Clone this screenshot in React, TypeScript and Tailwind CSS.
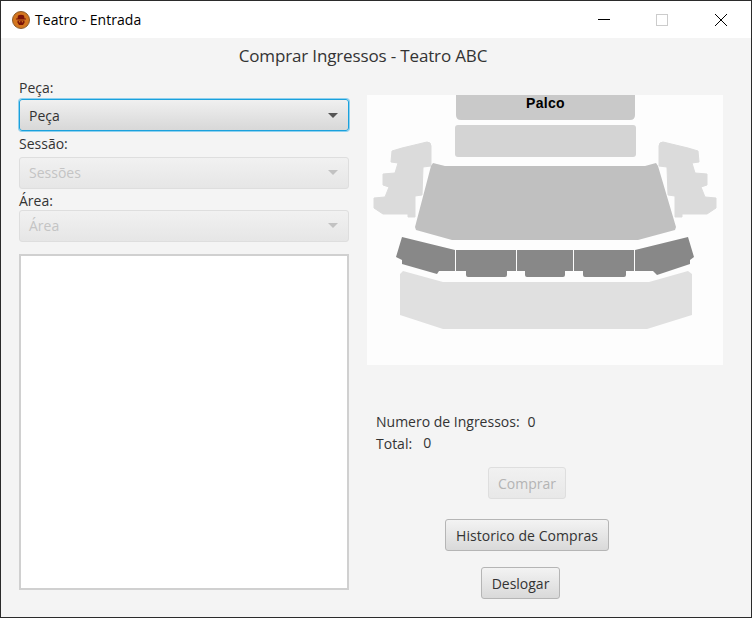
const font = { fontFamily: '"Open Sans", "Noto Sans", sans-serif' };

const ComboBox = ({ label, disabled }: { label: string; disabled?: boolean }) => (
  <div
    className={`flex h-[32px] w-[330px] items-center justify-between rounded-[3px] border bg-gradient-to-b pl-[9px] pr-[10px] text-[14px] ${
      disabled
        ? 'border-[#dedede] from-[#f1f1f1] to-[#e6e6e6] pb-[2px] text-[#c4c4c4]'
        : 'border-[#1aa1dc] from-[#f0f0f0] to-[#d8d8d8] text-[#333333] shadow-[0_0_0_1px_#8fd0ee]'
    }`}
  >
    <span>{label}</span>
    <svg width="10" height="5" viewBox="0 0 10 5">
      <path d="M0 0h10L5 5z" fill={disabled ? '#c2c2c2' : '#555555'} />
    </svg>
  </div>
);

const ActionButton = ({ label, disabled, className }: { label: string; disabled?: boolean; className: string }) => (
  <button
    className={`flex h-[32px] items-center justify-center rounded-[3px] border bg-gradient-to-b text-[14px] ${
      disabled
        ? 'border-[#dedede] from-[#f1f1f1] to-[#e8e8e8] text-[#b4b4b4]'
        : 'border-[#b5b5b5] from-[#f3f3f3] to-[#d9d9d9] text-[#333333]'
    } ${className}`}
  >
    {label}
  </button>
);

const SideBlock = () => (
  <path
    d="M64 51Q64 47 60 47L35 53 25 56 24 67 31 68 28 78 16 79 16 90 22 92 18 102 7 103 7 113 16 119 41 119 41 122 48 122 48 101 55 100 56 72 64 71Z"
    fill="#dbdbdb"
    stroke="#dbdbdb"
    strokeLinejoin="round"
  />
);

const SeatMap = () => (
  <svg width="356" height="270" viewBox="0 0 356 270" className="bg-[#fdfdfd]">
    <path d="M89 0H268V20Q268 25 263 25H94Q89 25 89 20Z" fill="#c9c9c9" />
    <text x="178.5" y="12.5" textAnchor="middle" fontFamily="Liberation Sans" fontWeight="700" fontSize="14" letterSpacing="0.3" fill="#000000">
      Palco
    </text>
    <rect x="88" y="30" width="181" height="32" rx="3" fill="#d4d4d4" />
    <SideBlock />
    <g transform="translate(356 0) scale(-1 1)">
      <SideBlock />
    </g>
    <path d="M66 68 78 71H278L289 68 291 71 309 132 308 135 271 145H85L49 135 48 132 64 71Z" fill="#c0c0c0" />
    <path d="M35 142 88 155V176H72L70 179 35 169V165L29 162Z" fill="#888888" />
    <path d="M89 155H149V176H140V180Q140 182 138 182H101Q99 182 99 180V176H89Z" fill="#888888" />
    <path d="M150 155H206V176H198V180Q198 182 196 182H160Q158 182 158 180V176H150Z" fill="#888888" />
    <path d="M207 155H267V176H259V180Q259 182 257 182H218Q216 182 216 180V176H207Z" fill="#888888" />
    <path d="M268 155 321 142 327 162 323 165V169L290 180 286 176H268Z" fill="#888888" />
    <path d="M33 179 36 176 76 187H282L321 176 325 179V220L280 234H76L33 220Z" fill="#e0e0e0" />
  </svg>
);

const AppLogo = () => (
  <svg width="18" height="18" viewBox="0 0 18 18">
    <circle cx="9" cy="9" r="8.5" fill="#d4761e" stroke="#8a5a2a" />
    <path d="M6 4.5Q9 3 12 4.5L12.5 7.5H14V8.5H4V7.5H5.5Z" fill="#7a1408" />
    <path d="M5.5 9.5H12.5V11.5L11 14H7L5.5 11.5Z" fill="#7a1408" />
    <circle cx="7.6" cy="10.8" r="0.8" fill="#d4761e" />
    <circle cx="10.4" cy="10.8" r="0.8" fill="#d4761e" />
  </svg>
);

const App = () => {
  return (
    <div style={font} className="flex h-[618px] w-[752px] flex-col overflow-hidden border border-[#2b2b2b] bg-[#f4f4f4] text-[14px] text-[#333333]">
      {/* Title bar */}
      <div className="flex h-[37px] shrink-0 items-center bg-white pl-[11px] text-black">
        <AppLogo />
        <span className="ml-[5px] tracking-[0.05px]">Teatro - Entrada</span>
        <div className="ml-auto flex items-center">
          <svg width="46" height="12" viewBox="0 0 46 12">
            <path d="M17 5.5H29" stroke="#000000" />
          </svg>
          <svg width="46" height="12" viewBox="0 0 46 12" className="ml-[12px]">
            <rect x="17.5" y="0.5" width="11" height="11" fill="none" stroke="#cccccc" />
          </svg>
          <svg width="46" height="12" viewBox="0 0 46 12" className="ml-[13px] mr-[7px]">
            <path d="M17 0 29 12M29 0 17 12" stroke="#000000" />
          </svg>
        </div>
      </div>

      <h1 className="mt-[7px] pr-[26px] text-center text-[17px] leading-[22px] tracking-[-0.15px]">Comprar Ingressos - Teatro ABC</h1>

      <div className="mt-[11px] flex pl-[18px]">
        {/* Left column */}
        <div className="flex w-[348px] shrink-0 flex-col">
          <label className="h-[21px] leading-[19px]">Peça:</label>
          <ComboBox label="Peça" />
          <label className="mt-[3px] h-[23px] leading-[19px]">Sessão:</label>
          <ComboBox label="Sessões" disabled />
          <label className="mt-[2px] h-[19px] leading-[19px]">Área:</label>
          <ComboBox label="Área" disabled />
          <div className="mt-[12px] h-[336px] w-[330px] border-2 border-[#d0d0d0] bg-white" />
        </div>

        {/* Right column */}
        <div className="flex flex-col pt-[17px]">
          <SeatMap />
          <div className="ml-[9px] mt-[47px] flex items-center leading-[20px]">
            <span>Numero de Ingressos:</span>
            <span className="ml-[8px]">0</span>
          </div>
          <div className="ml-[9px] mt-[2px] flex leading-[20px]">
            <span>Total:</span>
            <span className="ml-[11px] -translate-y-px">0</span>
          </div>
          <div className="mt-[13px] flex flex-col">
            <ActionButton label="Comprar" disabled className="ml-[121px] w-[78px]" />
            <ActionButton label="Historico de Compras" className="ml-[78px] mt-[20px] w-[164px] tracking-[0.05px]" />
            <ActionButton label="Deslogar" className="ml-[114px] mt-[16px] w-[79px]" />
          </div>
        </div>
      </div>
    </div>
  );
};

export default App;
